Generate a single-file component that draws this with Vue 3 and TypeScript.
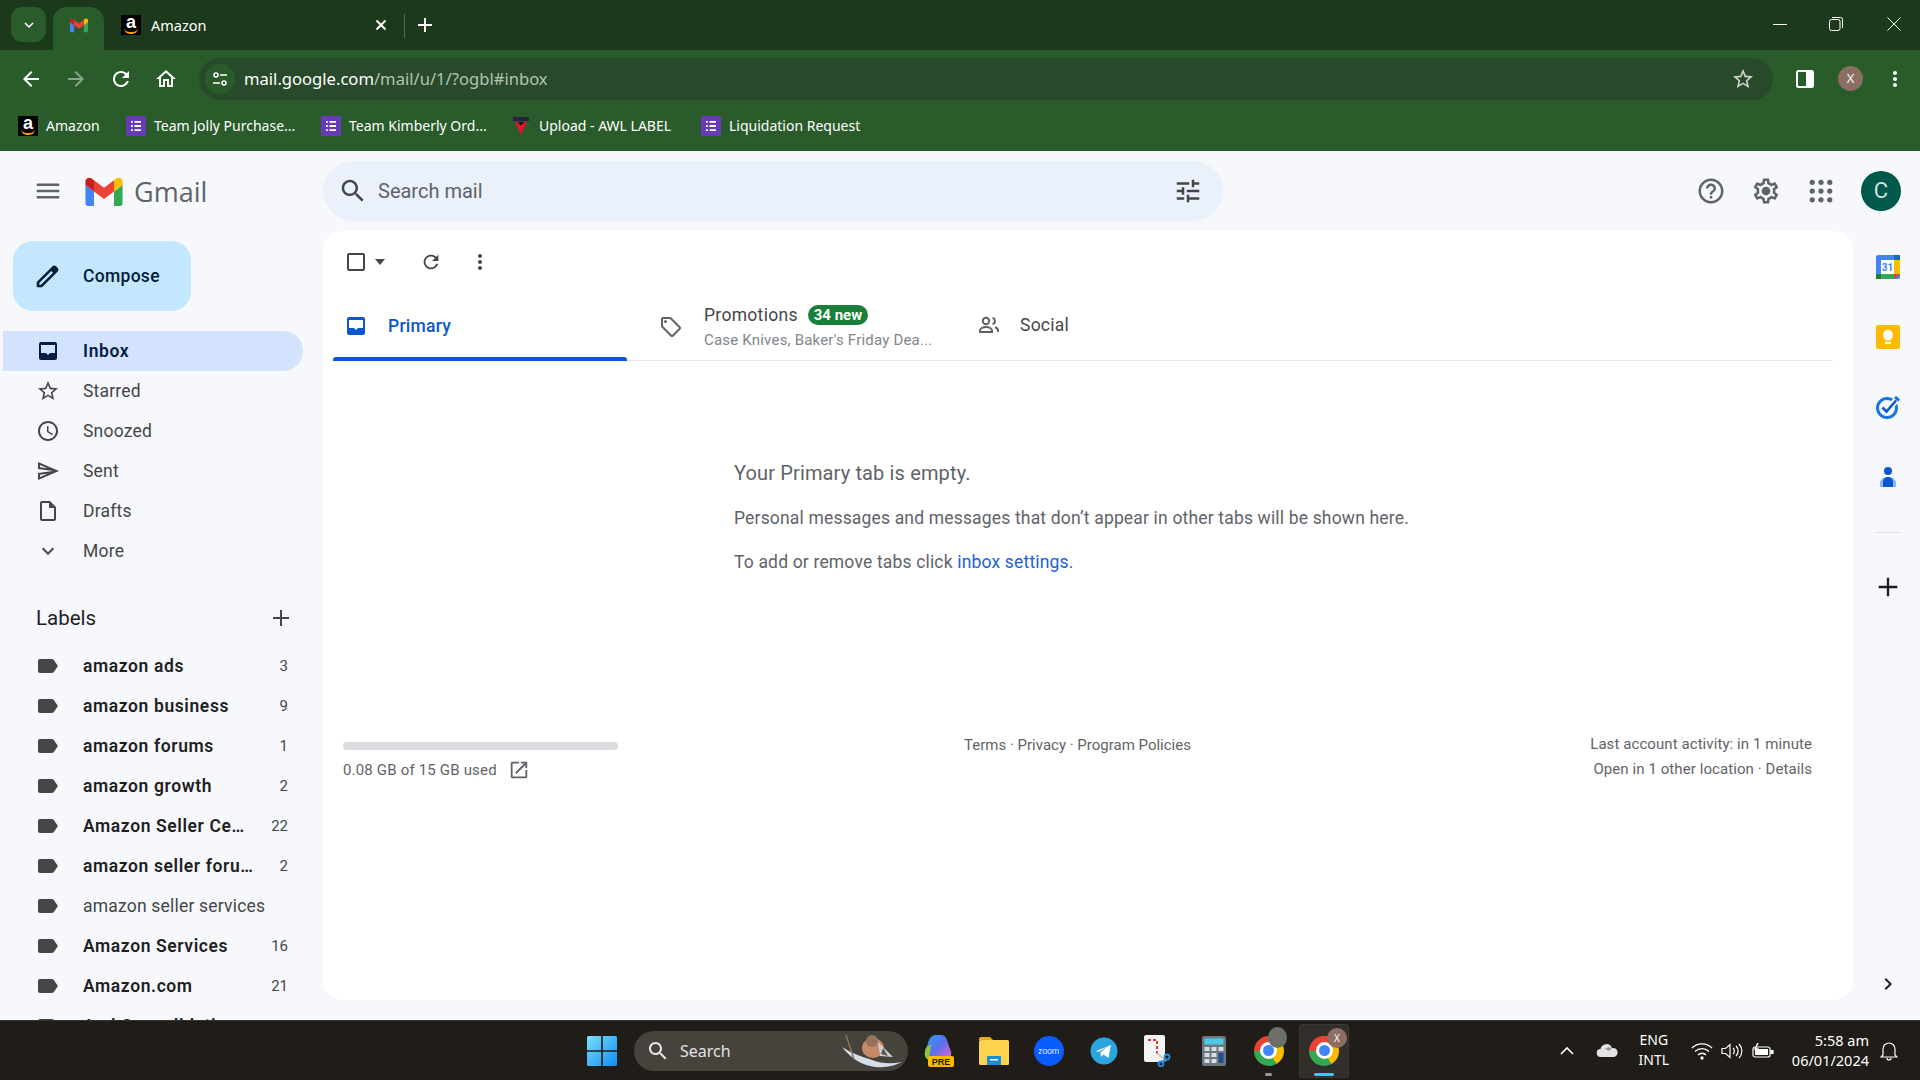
<script setup lang="ts">
const paths = {
  back: 'M20 11H7.83l5.59-5.59L12 4l-8 8 8 8 1.41-1.41L7.83 13H20v-2z',
  forward: 'M4 11h12.17l-5.59-5.59L12 4l8 8-8 8-1.41-1.41L16.17 13H4v-2z',
  reload: 'M17.65 6.35C16.2 4.9 14.21 4 12 4c-4.42 0-7.99 3.58-7.99 8s3.57 8 7.99 8c3.73 0 6.84-2.55 7.73-6h-2.08c-.82 2.33-3.04 4-5.65 4-3.31 0-6-2.69-6-6s2.69-6 6-6c1.66 0 3.14.69 4.22 1.78L13 11h7V4l-2.35 2.35z',
  home: 'M12 5.69l5 4.5V18h-2v-6H9v6H7v-7.81l5-4.5M12 3L2 12h3v8h6v-6h2v6h6v-8h3L12 3z',
  star: 'M22 9.24l-7.19-.62L12 2 9.19 8.63 2 9.24l5.46 4.73L5.82 21 12 17.27 18.18 21l-1.63-7.03L22 9.24zM12 15.4l-3.76 2.27 1-4.28-3.32-2.88 4.38-.38L12 6.1l1.71 4.04 4.38.38-3.32 2.88 1 4.28L12 15.4z',
  menu: 'M3 18h18v-2H3v2zm0-5h18v-2H3v2zm0-7v2h18V6H3z',
  search: 'M15.5 14h-.79l-.28-.27C15.41 12.59 16 11.11 16 9.5 16 5.91 13.09 3 9.5 3S3 5.91 3 9.5 5.91 16 9.5 16c1.61 0 3.09-.59 4.23-1.57l.27.28v.79l5 4.99L20.49 19l-4.99-5zm-6 0C7.01 14 5 11.99 5 9.5S7.01 5 9.5 5 14 7.01 14 9.5 11.99 14 9.5 14z',
  tune: 'M3 17v2h6v-2H3zM3 5v2h10V5H3zm10 16v-2h8v-2h-8v-2h-2v6h2zM7 9v2H3v2h4v2h2V9H7zm14 4v-2H11v2h10zm-6-4h2V7h4V5h-4V3h-2v6z',
  help: 'M11 18h2v-2h-2v2zm1-16C6.48 2 2 6.48 2 12s4.48 10 10 10 10-4.48 10-10S17.52 2 12 2zm0 18c-4.41 0-8-3.59-8-8s3.59-8 8-8 8 3.59 8 8-3.59 8-8 8zm0-14c-2.21 0-4 1.79-4 4h2c0-1.1.9-2 2-2s2 .9 2 2c0 2-3 1.75-3 5h2c0-2.25 3-2.5 3-5 0-2.21-1.79-4-4-4z',
  gear: 'M19.43 12.98c.04-.32.07-.64.07-.98 0-.34-.03-.66-.07-.98l2.11-1.65c.19-.15.24-.42.12-.64l-2-3.46c-.09-.16-.26-.25-.44-.25-.06 0-.12.01-.17.03l-2.49 1c-.52-.4-1.08-.73-1.69-.98l-.38-2.65C14.46 2.18 14.25 2 14 2h-4c-.25 0-.46.18-.49.42l-.38 2.65c-.61.25-1.17.59-1.69.98l-2.49-1c-.06-.02-.12-.03-.18-.03-.17 0-.34.09-.43.25l-2 3.46c-.13.22-.07.49.12.64l2.11 1.65c-.04.32-.07.65-.07.98 0 .33.03.66.07.98l-2.11 1.65c-.19.15-.24.42-.12.64l2 3.46c.09.16.26.25.44.25.06 0 .12-.01.17-.03l2.49-1c.52.4 1.08.73 1.69.98l.38 2.65c.03.24.24.42.49.42h4c.25 0 .46-.18.49-.42l.38-2.65c.61-.25 1.17-.59 1.69-.98l2.49 1c.06.02.12.03.18.03.17 0 .34-.09.43-.25l2-3.46c.12-.22.07-.49-.12-.64l-2.11-1.65zm-1.98-1.71c.04.31.05.52.05.73 0 .21-.02.43-.05.73l-.14 1.13.89.7 1.08.84-.7 1.21-1.27-.51-1.04-.42-.9.68c-.43.32-.84.56-1.25.73l-1.06.43-.16 1.13-.2 1.35h-1.4l-.19-1.35-.16-1.13-1.06-.43c-.43-.18-.83-.41-1.23-.71l-.91-.7-1.06.43-1.27.51-.7-1.21 1.08-.84.89-.7-.14-1.13c-.03-.31-.05-.54-.05-.74s.02-.43.05-.73l.14-1.13-.89-.7-1.08-.84.7-1.21 1.27.51 1.04.42.9-.68c.43-.32.84-.56 1.25-.73l1.06-.43.16-1.13.2-1.35h1.39l.19 1.35.16 1.13 1.06.43c.43.18.83.41 1.23.71l.91.7 1.06-.43 1.27-.51.7 1.21-1.07.85-.89.7.14 1.13zM12 8.5a3.5 3.5 0 1 0 0 7 3.5 3.5 0 0 0 0-7z',
  inbox: 'M19 3H5c-1.1 0-2 .9-2 2v14c0 1.1.9 2 2 2h14c1.1 0 2-.9 2-2V5c0-1.1-.9-2-2-2zM5 6h14v8h-5l-2 2-2-2H5V6z',
  clock: 'M11.99 2C6.47 2 2 6.48 2 12s4.47 10 9.99 10C17.52 22 22 17.52 22 12S17.52 2 11.99 2zM12 20c-4.42 0-8-3.58-8-8s3.58-8 8-8 8 3.58 8 8-3.58 8-8 8zm.5-13H11v6l5.25 3.15.75-1.23-4.5-2.67z',
  send: 'M4.01 6.03l7.51 3.22-7.52-1 .01-2.22m7.5 8.72L4 17.97v-2.22l7.51-1M2.01 3L2 10l15 2-15 2 .01 7L23 12 2.01 3z',
  draft: 'M14 2H6c-1.1 0-2 .9-2 2v16c0 1.1.9 2 2 2h12c1.1 0 2-.9 2-2V8l-6-6zm4 18H6V4h7v5h5v11z',
  more: 'M16.59 8.59L12 13.17 7.41 8.59 6 10l6 6 6-6z',
  plus: 'M20 13h-7v7h-2v-7H4v-2h7V4h2v7h7v2z',
  label: 'M17.63 5.84C17.27 5.33 16.67 5 16 5L4 5.01C2.9 5.01 2 5.9 2 7v10c0 1.1.9 1.99 2 1.99L16 19c.67 0 1.27-.33 1.63-.84L22 12l-4.37-6.16z',
  dots: 'M12 8c1.1 0 2-.9 2-2s-.9-2-2-2-2 .9-2 2 .9 2 2 2zm0 2c-1.1 0-2 .9-2 2s.9 2 2 2 2-.9 2-2-.9-2-2-2zm0 6c-1.1 0-2 .9-2 2s.9 2 2 2 2-.9 2-2-.9-2-2-2z',
  tag: 'M21.41 11.58l-9-9C12.05 2.22 11.55 2 11 2H4c-1.1 0-2 .9-2 2v7c0 .55.22 1.05.59 1.42l9 9c.36.36.86.58 1.41.58s1.05-.22 1.41-.59l7-7c.37-.36.59-.86.59-1.41s-.23-1.06-.59-1.42zM13 20.01L4 11V4h7v-.01l9 9-7 7.02zM6.5 5A1.5 1.5 0 1 0 6.5 8a1.5 1.5 0 0 0 0-3z',
  external: 'M19 19H5V5h7V3H5c-1.11 0-2 .9-2 2v14c0 1.1.89 2 2 2h14c1.1 0 2-.9 2-2v-7h-2v7zM14 3v2h3.59l-9.83 9.83 1.41 1.41L19 6.41V10h2V3h-7z',
  pencil: 'M3 21v-4.2L15.6 4.2a2 2 0 0 1 2.8 0l1.4 1.4a2 2 0 0 1 0 2.8L7.2 21H3zm2-2h1.4L16 9.4 14.6 8 5 17.6V19z',
  right: 'M8.59 16.59L13.17 12 8.59 7.41 10 6l6 6-6 6-1.41-1.41z',
  check: 'M19 5v14H5V5h14m0-2H5c-1.1 0-2 .9-2 2v14c0 1.1.9 2 2 2h14c1.1 0 2-.9 2-2V5c0-1.1-.9-2-2-2z',
}

const bookmarks = [
  { name: 'Amazon', kind: 'amazon', width: 108 },
  { name: 'Team Jolly Purchase...', kind: 'form', width: 195 },
  { name: 'Team Kimberly Ord...', kind: 'form', width: 190 },
  { name: 'Upload - AWL LABEL', kind: 'upload', width: 190 },
  { name: 'Liquidation Request', kind: 'form', width: 190 },
]

const navItems = [
  { name: 'Inbox', icon: paths.inbox, active: true },
  { name: 'Starred', icon: paths.star },
  { name: 'Snoozed', icon: paths.clock },
  { name: 'Sent', icon: paths.send },
  { name: 'Drafts', icon: paths.draft },
  { name: 'More', icon: paths.more },
]

const labels = [
  { name: 'amazon ads', count: '3', unread: true },
  { name: 'amazon business', count: '9', unread: true },
  { name: 'amazon forums', count: '1', unread: true },
  { name: 'amazon growth', count: '2', unread: true },
  { name: 'Amazon Seller Central', count: '22', unread: true },
  { name: 'amazon seller forums', count: '2', unread: true },
  { name: 'amazon seller services', count: '', unread: false },
  { name: 'Amazon Services', count: '16', unread: true },
  { name: 'Amazon.com', count: '21', unread: true },
  { name: 'And Consolidation', count: '', unread: true },
]
</script>

<template>
  <div class="screen">
    <!-- chrome tab strip -->
    <div class="tabstrip">
      <div class="tab-search">
        <svg width="18" height="18" viewBox="0 0 24 24" fill="#fff"><path :d="paths.more" /></svg>
      </div>
      <div class="tab-active">
        <svg class="m-logo-small" viewBox="0 0 52 42"><path fill="#4285f4" d="M3.6 42h8.4V21.6L0 12.6V38.4C0 40.4 1.6 42 3.6 42z" /><path fill="#34a853" d="M40 42h8.4c2 0 3.6-1.6 3.6-3.6V12.6L40 21.6z" /><path fill="#fbbc04" d="M40 6v15.6l12-9V7.8c0-4.45-5.08-6.99-8.64-4.32z" /><path fill="#ea4335" d="M12 21.6V6l14 10.5L40 6v15.6L26 32.1z" /><path fill="#c5221f" d="M0 7.8v4.8l12 9V6L8.64 3.48C5.08.81 0 3.35 0 7.8z" /></svg>
      </div>
      <div class="tab-other">
        <span class="fav-amazon">a<i></i></span>
        <span class="tab-title">Amazon</span>
        <svg class="tab-close" width="14" height="14" viewBox="0 0 14 14" stroke="#fff" stroke-width="2"><path d="M2.5 2.5l9 9M11.5 2.5l-9 9" /></svg>
      </div>
      <div class="tab-sep"></div>
      <svg class="tab-new" width="16" height="16" viewBox="0 0 16 16" stroke="#fff" stroke-width="2"><path d="M8 1v14M1 8h14" /></svg>
      <div class="win-controls">
        <svg width="14" height="14" viewBox="0 0 14 14" stroke="#fff"><path d="M0 7.5h14" /></svg>
        <svg class="win-restore" width="14" height="14" viewBox="0 0 14 14" fill="none" stroke="#fff"><rect x="0.5" y="2.5" width="10.5" height="11" rx="2" /><path d="M3 .5h8.5a2 2 0 0 1 2 2V11" /></svg>
        <svg class="win-close" width="14" height="14" viewBox="0 0 14 14" stroke="#fff"><path d="M.5.5l13 13M13.5.5l-13 13" /></svg>
      </div>
    </div>

    <!-- chrome toolbar -->
    <div class="toolbar">
      <svg class="nav-btn" viewBox="0 0 24 24" fill="#fff"><path :d="paths.back" /></svg>
      <svg class="nav-btn dim" viewBox="0 0 24 24" fill="#fff"><path :d="paths.forward" /></svg>
      <svg class="nav-btn" viewBox="0 0 24 24" fill="#fff"><path :d="paths.reload" /></svg>
      <svg class="nav-btn" viewBox="0 0 24 24" fill="#fff"><path :d="paths.home" /></svg>
      <div class="omnibox">
        <span class="chip">
          <svg width="16" height="16" viewBox="0 0 16 16" fill="none" stroke="#fff" stroke-width="1.5"><circle cx="4" cy="4" r="2" /><path d="M8 4h7M1 12h7" /><circle cx="12" cy="12" r="2" /></svg>
        </span>
        <span class="url"><b>mail.google.com</b>/mail/u/1/?ogbl#inbox</span>
        <svg class="omni-star" width="24" height="24" viewBox="0 0 24 24" fill="#d0d5d0"><path :d="paths.star" /></svg>
      </div>
      <svg class="side-panel" width="18" height="18" viewBox="0 0 18 18"><rect x="1" y="1" width="16" height="16" rx="1.5" fill="none" stroke="#fff" stroke-width="2" /><rect x="10" y="1" width="7" height="16" fill="#fff" /></svg>
      <span class="profile">X</span>
      <svg class="chrome-dots" width="24" height="24" viewBox="0 0 24 24" fill="#fff"><path :d="paths.dots" /></svg>
    </div>

    <!-- bookmarks -->
    <div class="bookmarks">
      <div v-for="b in bookmarks" :key="b.name" class="bookmark" :style="{ width: b.width + 'px' }">
        <span v-if="b.kind === 'amazon'" class="fav-amazon">a<i></i></span>
        <svg v-else-if="b.kind === 'form'" class="fav" viewBox="0 0 20 20"><rect width="20" height="20" rx="1" fill="#673ab7" /><path d="M5 5h1.8v1.8H5zM8.5 5H15v1.8H8.5zM5 9.1h1.8v1.8H5zM8.5 9.1H15v1.8H8.5zM5 13.2h1.8V15H5zM8.5 13.2H15V15H8.5z" fill="#fff" /></svg>
        <svg v-else class="fav" viewBox="0 0 20 20"><rect x="2" y="1" width="16" height="4" fill="#2b2140" /><path d="M4 6h12l-6 13z" fill="#e3122d" /><path d="M6.500 6h7L10 9.500z" fill="#1c1018" /></svg>
        <span class="bookmark-name">{{ b.name }}</span>
      </div>
    </div>

    <!-- gmail -->
    <div class="gmail">
      <header class="gm-header">
        <div class="gm-brand">
          <svg class="gm-menu" viewBox="0 0 24 24" fill="#5f6368"><path :d="paths.menu" /></svg>
          <svg class="gm-logo" viewBox="0 0 52 42"><path fill="#4285f4" d="M3.6 42h8.4V21.6L0 12.6V38.4C0 40.4 1.6 42 3.6 42z" /><path fill="#34a853" d="M40 42h8.4c2 0 3.6-1.6 3.6-3.6V12.6L40 21.6z" /><path fill="#fbbc04" d="M40 6v15.6l12-9V7.8c0-4.45-5.08-6.99-8.64-4.32z" /><path fill="#ea4335" d="M12 21.6V6l14 10.5L40 6v15.6L26 32.1z" /><path fill="#c5221f" d="M0 7.8v4.8l12 9V6L8.64 3.48C5.08.81 0 3.35 0 7.8z" /></svg>
          <span class="gm-word">Gmail</span>
        </div>
        <div class="gm-search">
          <svg width="30" height="30" viewBox="0 0 24 24" fill="#444746"><path :d="paths.search" /></svg>
          <span class="gm-search-text">Search mail</span>
          <svg class="gm-tune" width="30" height="30" viewBox="0 0 24 24" fill="#444746"><path :d="paths.tune" /></svg>
        </div>
        <div class="gm-actions">
          <svg width="30" height="30" viewBox="0 0 24 24" fill="#5f6368"><path :d="paths.help" /></svg>
          <svg width="30" height="30" viewBox="0 0 24 24" fill="#5f6368"><path :d="paths.gear" /></svg>
          <svg width="30" height="30" viewBox="0 0 24 24" fill="#5f6368"><g v-for="y in [5, 12, 19]" :key="y"><circle v-for="x in [5, 12, 19]" :key="x" :cx="x" :cy="y" r="2.1" /></g></svg>
          <span class="gm-avatar">C</span>
        </div>
      </header>

      <div class="gm-body">
        <aside class="gm-side">
          <button class="compose" type="button">
            <svg width="30" height="30" viewBox="0 0 24 24" fill="#001d35"><path :d="paths.pencil" /></svg>
            <span>Compose</span>
          </button>
          <div v-for="n in navItems" :key="n.name" class="row" :class="{ 'row--active': n.active }">
            <svg class="row-icon" viewBox="0 0 24 24"><path :d="n.icon" fill-rule="evenodd" /></svg>
            <span class="row-name">{{ n.name }}</span>
          </div>
          <div class="labels-head">
            <span>Labels</span>
            <svg width="24" height="24" viewBox="0 0 24 24" fill="#444746"><path :d="paths.plus" /></svg>
          </div>
          <div v-for="l in labels" :key="l.name" class="row" :class="{ 'row--unread': l.unread }">
            <svg class="row-icon" viewBox="0 0 24 24"><path :d="paths.label" /></svg>
            <span class="row-name">{{ l.name }}</span>
            <span v-if="l.count" class="row-count">{{ l.count }}</span>
          </div>
        </aside>

        <main class="gm-card">
          <div class="mail-tools">
            <svg class="tool-check" width="24" height="24" viewBox="0 0 24 24" fill="#444746"><path :d="paths.check" /></svg>
            <svg class="tool-caret" width="10" height="6" viewBox="0 0 10 6" fill="#444746"><path d="M0 0h10L5 6z" /></svg>
            <svg class="tool-refresh" width="22" height="22" viewBox="0 0 24 24" fill="#444746"><path :d="paths.reload" /></svg>
            <svg class="tool-dots" width="24" height="24" viewBox="0 0 24 24" fill="#444746"><path :d="paths.dots" /></svg>
          </div>

          <div class="mail-tabs">
            <div class="mail-tab mail-tab--primary">
              <svg width="24" height="24" viewBox="0 0 24 24" fill="#0b57d0"><path :d="paths.inbox" fill-rule="evenodd" /></svg>
              <span>Primary</span>
            </div>
            <div class="mail-tab mail-tab--promo">
              <svg width="24" height="24" viewBox="0 0 24 24" fill="#5f6368"><path :d="paths.tag" fill-rule="evenodd" /></svg>
              <div class="promo-text">
                <div class="promo-top"><span>Promotions</span><em>34 new</em></div>
                <div class="promo-sub">Case Knives, Baker's Friday Dea...</div>
              </div>
            </div>
            <div class="mail-tab mail-tab--social">
              <svg width="24" height="24" viewBox="0 0 24 24" fill="none" stroke="#5f6368" stroke-width="2"><circle cx="9" cy="8" r="3.2" /><path d="M3 19v-1.5c0-2 3-3.5 6-3.5s6 1.5 6 3.5V19z" /><path d="M15.5 4.9a3.2 3.2 0 0 1 0 6.2M18 14.3c1.7.5 3 1.7 3 3.2V19" /></svg>
              <span>Social</span>
            </div>
          </div>

          <div class="empty">
            <h3>Your Primary tab is empty.</h3>
            <p>Personal messages and messages that don’t appear in other tabs will be shown here.</p>
            <p class="empty-last">To add or remove tabs click <a>inbox settings</a>.</p>
          </div>

          <footer class="gm-foot">
            <div>
              <div class="storage"></div>
              <div class="storage-text">
                <span>0.08 GB of 15 GB used</span>
                <svg width="22" height="22" viewBox="0 0 24 24" fill="#5f6368"><path :d="paths.external" /></svg>
              </div>
            </div>
            <div class="foot-links">Terms · Privacy · Program Policies</div>
            <div class="foot-right">
              <div>Last account activity: in 1 minute</div>
              <div>Open in 1 other location · Details</div>
            </div>
          </footer>
        </main>

        <aside class="gm-rail">
          <div class="rail-item">
            <svg width="26" height="26" viewBox="0 0 26 26">
              <rect x="1" y="1" width="24" height="24" rx="2" fill="#4285f4" />
              <rect x="19" y="1" width="6" height="5" fill="#1967d2" />
              <rect x="19" y="6" width="6" height="14" fill="#fbbc04" />
              <rect x="1" y="20" width="18" height="5" fill="#34a853" />
              <path d="M19 20h6l-6 5z" fill="#ea4335" />
              <rect x="1" y="20" width="5" height="5" fill="#188038" />
              <rect x="6" y="6" width="13" height="14" fill="#fff" />
              <text x="12.5" y="17" class="cal-num">31</text>
            </svg>
          </div>
          <div class="rail-item">
            <svg width="26" height="26" viewBox="0 0 26 26">
              <rect x="1" y="1" width="24" height="24" rx="2" fill="#ffba00" />
              <circle cx="13" cy="11" r="5" fill="#fff" />
              <rect x="10.5" y="13" width="5" height="3.5" fill="#fff" />
              <rect x="10" y="18" width="6" height="1.8" fill="#fff" />
            </svg>
          </div>
          <div class="rail-item">
            <svg width="26" height="26" viewBox="0 0 26 26" fill="none">
              <circle cx="12" cy="14" r="9.5" stroke="#1a73e8" stroke-width="3" />
              <path d="M7.5 13.5l4 4L22 5" stroke="#fff" stroke-width="6" />
              <path d="M7.5 13.5l4 4L21 6.5" stroke="#0b57d0" stroke-width="2.6" />
              <path d="M20 3l4 3.5" stroke="#1a73e8" stroke-width="3" />
            </svg>
          </div>
          <div class="rail-item">
            <svg width="26" height="26" viewBox="0 0 26 26">
              <circle cx="13" cy="7" r="4" fill="#0b57d0" />
              <path d="M5 23v-4c0-3 3-6 8-6s8 3 8 6v4z" fill="#8ab4f8" />
              <path d="M8 23v-5c0-3 2-5 5-5s5 2 5 5v5z" fill="#0b57d0" />
            </svg>
          </div>
          <div class="rail-line"></div>
          <div class="rail-item rail-item--plus">
            <svg width="28" height="28" viewBox="0 0 24 24" fill="#1f1f1f"><path :d="paths.plus" /></svg>
          </div>
          <svg class="rail-chevron" width="24" height="24" viewBox="0 0 24 24" fill="#1f1f1f"><path :d="paths.right" /></svg>
        </aside>
      </div>
    </div>

    <!-- windows taskbar -->
    <div class="taskbar">
      <svg class="tb-win" width="30" height="30" viewBox="0 0 30 30">
        <defs><linearGradient id="winBlue" x1="0" y1="0" x2="1" y2="1"><stop offset="0" stop-color="#7adfff" /><stop offset="1" stop-color="#0f8df0" /></linearGradient></defs>
        <path fill="url(#winBlue)" d="M0 1.5A1.5 1.5 0 0 1 1.5 0H14.2v14.2H0zM15.8 0h12.7A1.5 1.5 0 0 1 30 1.5V14.2H15.8zM0 15.8h14.2V30H1.5A1.5 1.5 0 0 1 0 28.5zM15.8 15.8H30V28.5a1.5 1.5 0 0 1-1.5 1.5H15.8z" />
      </svg>
      <div class="tb-search">
        <svg width="24" height="24" viewBox="0 0 24 24" fill="#e8e8e8"><path :d="paths.search" /></svg>
        <span>Search</span>
        <svg class="tb-bird" width="72" height="40" viewBox="0 0 72 40">
          <path d="M6 16c8 10 16 16 28 19 13 3 24 0 32-4-10 2-20 2-30-2C24 25 15 22 6 16z" fill="#d7dee8" />
          <path d="M10 4l8 24" stroke="#8a7a5a" stroke-width="1.5" />
          <ellipse cx="37" cy="17" rx="11" ry="10" fill="#c58a66" />
          <circle cx="36" cy="10" r="6" fill="#94725c" />
          <path d="M42 11l15 15-13-1z" fill="#cfcfcf" />
          <path d="M47 17l5 8-7-2z" fill="#555" />
        </svg>
      </div>
      <div class="tb-apps">
        <div class="tb-app">
          <svg width="32" height="34" viewBox="0 0 32 34">
            <defs><linearGradient id="copilot" x1="0" y1="0" x2="1" y2="1"><stop offset="0" stop-color="#2aa3e8" /><stop offset=".5" stop-color="#5b6ef0" /><stop offset="1" stop-color="#e66ac8" /></linearGradient></defs>
            <path d="M6 6c1-3 4-5 7-5h5c3 0 5 2 6 5l4 12c1 5-2 8-6 8H9C4 26 1 22 2 18z" fill="url(#copilot)" />
            <path d="M2 18c0-4 3-7 6-7L6 26c-3-1-5-4-4-8z" fill="#8fc53f" />
            <rect x="5" y="22" width="26" height="11" rx="2" fill="#ffb900" />
            <text x="18" y="31" class="pre">PRE</text>
          </svg>
        </div>
        <div class="tb-app">
          <svg width="32" height="30" viewBox="0 0 32 30">
            <path d="M1 3a2 2 0 0 1 2-2h9l3 3h-14z" fill="#e8a913" />
            <rect x="1" y="4" width="30" height="25" rx="1.5" fill="#ffd24d" />
            <rect x="9" y="20" width="14" height="9" fill="#1a8fd6" />
            <rect x="12" y="23" width="8" height="1.5" fill="#fff" />
          </svg>
        </div>
        <div class="tb-app">
          <span class="zoom">zoom</span>
        </div>
        <div class="tb-app">
          <svg width="28" height="28" viewBox="0 0 28 28">
            <circle cx="14" cy="14" r="13.5" fill="#2aa5e0" />
            <path d="M6 14l15-6-2.5 13-5-3.5-2.5 2.5-.5-4.5 7-6-9 5.5z" fill="#fff" />
          </svg>
        </div>
        <div class="tb-app">
          <svg width="32" height="32" viewBox="0 0 32 32" fill="none">
            <rect x="1" y="0" width="21" height="27" rx="2" fill="#f4f4f4" />
            <path d="M5 5h9v14" stroke="#d83b2e" stroke-width="2" stroke-dasharray="3 2" />
            <path d="M14 18l9 8" stroke="#ccc" stroke-width="2" />
            <circle cx="24" cy="22" r="2.5" stroke="#1f8fe0" stroke-width="1.8" />
            <circle cx="18" cy="29" r="2.5" stroke="#1f8fe0" stroke-width="1.8" />
            <path d="M19 27l4-3" stroke="#1f8fe0" stroke-width="1.8" />
          </svg>
        </div>
        <div class="tb-app">
          <svg width="24" height="30" viewBox="0 0 24 30">
            <rect width="24" height="30" rx="2" fill="#6c7780" />
            <rect x="2.5" y="2.5" width="19" height="6" fill="#4ccbe8" />
            <g fill="#d8dde1">
              <rect x="2.5" y="11" width="5" height="4" /><rect x="9.5" y="11" width="5" height="4" />
              <rect x="2.5" y="17" width="5" height="4" /><rect x="9.5" y="17" width="5" height="4" />
              <rect x="2.5" y="23" width="5" height="4" /><rect x="9.5" y="23" width="5" height="4" />
              <rect x="16.5" y="11" width="5" height="4" />
            </g>
            <rect x="16.5" y="17" width="5" height="10" fill="#1b4f8f" />
          </svg>
        </div>
        <div class="tb-app tb-app--chrome">
          <span class="chrome-logo"></span>
          <span class="tb-photo"></span>
          <span class="tb-mark"></span>
        </div>
        <div class="tb-app tb-app--chrome tb-app--open">
          <span class="chrome-logo"></span>
          <span class="tb-badge">X</span>
          <span class="tb-mark tb-mark--on"></span>
        </div>
      </div>

      <div class="tray">
        <svg class="tray-chev" width="16" height="16" viewBox="0 0 16 16" fill="none" stroke="#fff" stroke-width="1.6"><path d="M2 11l6-6 6 6" /></svg>
        <svg class="tray-cloud" width="22" height="14" viewBox="0 0 22 14"><path d="M5 13a4 4 0 0 1-.5-8A6 6 0 0 1 16 4a4.5 4.5 0 0 1 2 9z" fill="#e4e4e4" /><path d="M9 5a6 6 0 0 1 7-1l-3 3z" fill="#9a9a9a" /></svg>
        <div class="tray-lang">ENG<br />INTL</div>
        <svg class="tray-wifi" width="22" height="18" viewBox="0 0 22 18" fill="none" stroke="#fff" stroke-width="1.3"><path d="M1 6a14 14 0 0 1 20 0M4 9.5a10 10 0 0 1 14 0M7 13a5.5 5.5 0 0 1 8 0" /><circle cx="11" cy="16" r="1" fill="#fff" /></svg>
        <svg class="tray-vol" width="22" height="18" viewBox="0 0 22 18" fill="none" stroke="#fff" stroke-width="1.2"><path d="M1 6.5h3.5L9 2.5v13l-4.5-4H1z" /><path d="M12 6a4 4 0 0 1 0 6M15 4a7 7 0 0 1 0 10M18 2a10 10 0 0 1 0 14" /></svg>
        <svg class="tray-bat" width="22" height="16" viewBox="0 0 22 16" fill="none" stroke="#fff" stroke-width="1.2"><rect x="1" y="4" width="17" height="10" rx="2" /><path d="M19 7.5h2v3h-2z" fill="#fff" /><path d="M6 0L3 6h3l-1 4" stroke-width="1.5" /><rect x="3" y="6" width="13" height="6" fill="#fff" stroke="none" /></svg>
        <div class="tray-clock"><div>5:58 am</div><div>06/01/2024</div></div>
        <svg class="tray-bell" width="18" height="20" viewBox="0 0 18 20" fill="none" stroke="#fff" stroke-width="1.2"><path d="M3 14V8a6 6 0 0 1 12 0v6l2 2H1zM7 17a2 2 0 0 0 4 0" /></svg>
      </div>
    </div>
  </div>
</template>

<style scoped>
.screen {
  width: 1920px;
  height: 1080px;
  display: flex;
  flex-direction: column;
  overflow: hidden;
  font-family: "Noto Sans", "Open Sans", sans-serif;
  background: #f6f8fc;
}

/* chrome */
.tabstrip {
  height: 50px;
  flex: none;
  display: flex;
  align-items: flex-start;
  background: #1c3a1b;
  color: #fff;
  padding-left: 11px;
}
.tab-search {
  width: 35px;
  height: 35px;
  margin-top: 7px;
  border-radius: 11px;
  background: #2a5c2b;
  display: flex;
  align-items: center;
  justify-content: center;
}
.tab-active {
  width: 51px;
  height: 43px;
  margin: 7px 0 0 7px;
  border-radius: 14px 14px 0 0;
  background: #2a5c2b;
  display: flex;
  align-items: center;
  justify-content: center;
}
.m-logo-small { width: 18px; height: 16px; margin-bottom: 8px; }
.tab-other {
  width: 270px;
  height: 36px;
  margin: 7px 0 0 17px;
  display: flex;
  align-items: center;
  gap: 10px;
  font-size: 14.5px;
}
.tab-title { flex: 1; }
.tab-close { margin-right: 3px; }
.fav-amazon {
  position: relative;
  width: 20px;
  height: 20px;
  flex: none;
  background: #000;
  color: #fff;
  font: 700 18px/15px "Liberation Sans", sans-serif;
  text-align: center;
}
.fav-amazon i {
  position: absolute;
  left: 3px;
  right: 3px;
  bottom: 1px;
  height: 4px;
  border-bottom: 2px solid #f90;
  border-radius: 0 0 10px 10px;
}
.tab-sep {
  width: 1px;
  height: 24px;
  margin: 14px 0 0 13px;
  background: #3f7a3f;
}
.tab-new { margin: 17px 0 0 12px; }
.win-controls {
  margin-left: auto;
  height: 48px;
  padding-right: 19px;
  display: flex;
  align-items: center;
}
.win-restore { margin-left: 42px; }
.win-close { margin-left: 44px; }

.toolbar {
  height: 58px;
  flex: none;
  display: flex;
  align-items: center;
  padding: 0 13px 0 19px;
  background: #2a5c2b;
  border-bottom: 1px solid #2d602e;
  box-sizing: border-box;
}
.nav-btn { width: 24px; height: 24px; margin-right: 21px; flex: none; }
.dim { opacity: 0.45; }
.omnibox {
  width: 1574px;
  height: 42px;
  flex: none;
  display: flex;
  align-items: center;
  border-radius: 21px;
  background: #284a2b;
  padding: 0 18px 0 6px;
  box-sizing: border-box;
}
.chip {
  width: 30px;
  height: 30px;
  border-radius: 50%;
  background: #2a5c2b;
  display: flex;
  align-items: center;
  justify-content: center;
}
.url {
  margin-left: 9px;
  font-size: 16.6px;
  color: #b3c4b2;
}
.url b { font-weight: 400; color: #fff; }
.omni-star { margin-left: auto; }
.side-panel { margin-left: 23px; }
.profile {
  width: 25px;
  height: 25px;
  margin-left: 24px;
  border-radius: 50%;
  background: #8d6e63;
  color: #fff;
  font-size: 13px;
  line-height: 25px;
  text-align: center;
}
.chrome-dots { margin-left: 20px; }

.bookmarks {
  height: 43px;
  flex: none;
  display: flex;
  align-items: center;
  box-sizing: border-box;
  padding: 0 0 8px 18px;
  background: #2a5c2b;
  color: #fff;
  font-size: 14px;
}
.bookmark { display: flex; align-items: center; gap: 8px; white-space: nowrap; }
.fav { width: 20px; height: 20px; flex: none; }

/* gmail */
.gmail {
  flex: 1;
  min-height: 0;
  display: flex;
  flex-direction: column;
  font-family: Roboto, "Liberation Sans", sans-serif;
  color: #444746;
}
.gm-header {
  height: 80px;
  flex: none;
  display: flex;
  align-items: flex-start;
}
.gm-brand {
  width: 323px;
  height: 80px;
  flex: none;
  display: flex;
  align-items: center;
}
.gm-menu { width: 30px; height: 30px; margin-left: 33px; }
.gm-logo { width: 38px; height: 30px; margin-left: 22px; }
.gm-word {
  margin-left: 11px;
  font-size: 27px;
  color: #5f6368;
  font-family: "Open Sans", sans-serif;
}
.gm-search {
  width: 900px;
  height: 60px;
  margin-top: 10px;
  flex: none;
  display: flex;
  align-items: center;
  box-sizing: border-box;
  padding: 0 20px 0 15px;
  border-radius: 30px;
  background: #eaf1fb;
}
.gm-search-text { margin-left: 10px; font-size: 20px; color: #5f6368; }
.gm-tune { margin-left: auto; }
.gm-actions {
  flex: 1;
  height: 80px;
  display: flex;
  align-items: center;
  justify-content: flex-end;
  padding-right: 19px;
  gap: 25px;
}
.gm-avatar {
  width: 40px;
  height: 40px;
  border-radius: 50%;
  background: #00594a;
  color: #cfe3dd;
  font-size: 22px;
  line-height: 40px;
  text-align: center;
}

.gm-body { flex: 1; min-height: 0; display: flex; }
.gm-side {
  width: 323px;
  flex: none;
  overflow: hidden;
  padding-top: 10px;
  box-sizing: border-box;
}
.compose {
  width: 178px;
  height: 70px;
  margin: 0 0 20px 13px;
  display: flex;
  align-items: center;
  border: none;
  border-radius: 20px;
  background: #c2e7ff;
  color: #001d35;
  padding: 0 0 0 20px;
  font: 500 17.5px Roboto, sans-serif;
  letter-spacing: 0.3px;
}
.compose span { margin-left: 20px; }
.row {
  width: 300px;
  height: 40px;
  margin-left: 3px;
  display: flex;
  align-items: center;
  box-sizing: border-box;
  padding: 0 15px 0 33px;
  border-radius: 0 20px 20px 0;
  font-size: 17.5px;
  letter-spacing: 0.2px;
  color: #444746;
  fill: #444746;
}
.row-icon { width: 24px; height: 24px; flex: none; }
.row-name {
  margin-left: 23px;
  flex: 1;
  min-width: 0;
  overflow: hidden;
  white-space: nowrap;
  text-overflow: ellipsis;
}
.row-count {
  width: 35px;
  flex: none;
  text-align: right;
  font-size: 15px;
  color: #444746;
  font-weight: 400;
  letter-spacing: 0;
}
.row--active {
  background: #d3e3fd;
  color: #041e49;
  fill: #041e49;
  font-weight: 600;
  letter-spacing: 0.6px;
}
.row--unread { color: #1f1f1f; font-weight: 600; letter-spacing: 0.6px; }
.labels-head {
  height: 54px;
  margin-top: 20px;
  margin-bottom: 1px;
  display: flex;
  align-items: center;
  justify-content: space-between;
  padding: 0 30px 0 36px;
  font-size: 20.5px;
  color: #1f1f1f;
}

.gm-card {
  flex: 1;
  min-width: 0;
  margin-bottom: 20px;
  border-radius: 20px;
  background: #fff;
  display: flex;
  flex-direction: column;
  padding: 0 20px 0 10px;
}
.mail-tools {
  height: 61px;
  flex: none;
  display: flex;
  align-items: center;
  padding-left: 11px;
}
.tool-caret { margin-left: 7px; }
.tool-refresh { margin-left: 35px; }
.tool-dots { margin-left: 26px; }
.mail-tabs {
  height: 69px;
  flex: none;
  display: flex;
  border-bottom: 1px solid #e6e8eb;
  box-sizing: border-box;
  font-size: 17.5px;
  letter-spacing: 0.25px;
  color: #444746;
}
.mail-tab { display: flex; align-items: center; height: 68px; box-sizing: border-box; }
.mail-tab--primary {
  position: relative;
  width: 294px;
  padding: 0 0 1px 11px;
  gap: 20px;
  color: #0b57d0;
  font-weight: 500;
}
.mail-tab--primary::after {
  content: "";
  position: absolute;
  left: 0;
  right: 0;
  bottom: -1px;
  height: 4px;
  border-radius: 3px 3px 0 0;
  background: #0b57d0;
}
.mail-tab--promo { width: 333px; padding: 2px 0 0 32px; gap: 21px; }
.promo-top { display: flex; align-items: center; gap: 10px; color: #444746; letter-spacing: 0.3px; }
.promo-top span { line-height: 24px; }
.promo-top em {
  font-style: normal;
  font-size: 15px;
  font-weight: 700;
  letter-spacing: 0;
  line-height: 20px;
  padding: 0 6px;
  border-radius: 10px;
  background: #188038;
  color: #fff;
}
.promo-sub { font-size: 15px; line-height: 22px; letter-spacing: 0.2px; color: #80868b; margin-top: 2px; }
.mail-tab--social { padding: 0 0 2px 17px; gap: 19px; }

.empty { padding: 101px 0 0 401px; color: #5f6368; font-size: 17.5px; letter-spacing: 0.17px; }
.empty h3 { margin: 0; font-size: 20px; line-height: 22px; font-weight: 400; letter-spacing: 0.14px; }
.empty p { margin: 23px 0 0; line-height: 22px; }
.empty .empty-last { margin-top: 22px; }
.empty a { color: #1a62d6; }

.gm-foot {
  margin-top: 159px;
  display: grid;
  grid-template-columns: 1fr auto 1fr;
  padding: 0 21px 0 10px;
  font-size: 15px;
  line-height: 25px;
  color: #5f6368;
}
.storage { width: 275px; height: 8px; border-radius: 4px; background: #dadce0; margin: 10px 0 9px; }
.storage-text { display: flex; align-items: center; gap: 11px; line-height: 22px; letter-spacing: 0.18px; }
.foot-links { line-height: 26px; }
.foot-right { text-align: right; line-height: 25px; letter-spacing: 0.08px; }

.gm-rail {
  width: 67px;
  flex: none;
  display: flex;
  flex-direction: column;
  align-items: center;
  padding: 1px 0 24px 3px;
  box-sizing: border-box;
}
.rail-item { height: 70px; flex: none; display: flex; align-items: center; justify-content: center; }
.rail-line { width: 26px; height: 1px; margin-top: 20px; background: #dfe3e8; }
.rail-item--plus { margin-top: 19px; }
.rail-chevron { margin-top: auto; }
.cal-num { font: 700 10px Roboto, sans-serif; fill: #4285f4; text-anchor: middle; }

/* windows taskbar */
.taskbar {
  height: 60px;
  flex: none;
  display: flex;
  align-items: center;
  box-sizing: border-box;
  padding-left: 587px;
  background: #201c17;
  border-top: 1px solid #37332e;
  color: #fff;
  font-family: "Noto Sans", sans-serif;
}
.tb-search {
  width: 274px;
  height: 40px;
  margin-left: 17px;
  flex: none;
  display: flex;
  align-items: center;
  box-sizing: border-box;
  padding-left: 12px;
  border-radius: 20px;
  background: #46423c;
  font-size: 16px;
  color: #e2e2e2;
  overflow: hidden;
}
.tb-search span { margin-left: 10px; }
.tb-bird { margin-left: auto; }
.tb-apps { display: flex; margin-left: 3px; }
.tb-app {
  position: relative;
  width: 55px;
  height: 54px;
  flex: none;
  display: flex;
  align-items: center;
  justify-content: center;
}
.tb-app--open { background: #322e29; border-radius: 4px; box-shadow: inset 0 0 0 1px #3b3732; width: 50px; margin-left: 3px; }
.pre { font: 700 9px "Liberation Sans", sans-serif; fill: #1a1a1a; text-anchor: middle; }
.zoom {
  width: 30px;
  height: 30px;
  border-radius: 50%;
  background: #0b5cff;
  color: #dfe9ff;
  font: 9px/30px "Liberation Sans", sans-serif;
  text-align: center;
  letter-spacing: -0.3px;
}
.chrome-logo {
  position: relative;
  width: 30px;
  height: 30px;
  border-radius: 50%;
  background: conic-gradient(#ea4335 0 30deg, #fbbc04 30deg 150deg, #34a853 150deg 270deg, #ea4335 270deg);
  display: flex;
  align-items: center;
  justify-content: center;
}
.chrome-logo::after {
  content: "";
  width: 11px;
  height: 11px;
  border-radius: 50%;
  background: #4285f4;
  border: 3px solid #fff;
}
.tb-photo {
  position: absolute;
  top: 3px;
  right: 9px;
  width: 19px;
  height: 21px;
  border-radius: 50%;
  background: #6d6f6a;
}
.tb-badge {
  position: absolute;
  top: 4px;
  right: 2px;
  width: 20px;
  height: 20px;
  border-radius: 50%;
  background: #8d6e63;
  font-size: 10px;
  line-height: 20px;
  text-align: center;
}
.tb-mark {
  position: absolute;
  bottom: 2px;
  left: 50%;
  width: 7px;
  height: 3px;
  margin-left: -4px;
  border-radius: 2px;
  background: #9a9a9a;
}
.tb-mark--on { width: 20px; margin-left: -10px; background: #4cc2ff; }
.tray {
  margin-left: auto;
  display: flex;
  align-items: center;
  padding-right: 22px;
  font-size: 14px;
  line-height: 20px;
}
.tray-cloud { margin-left: 21px; }
.tray-lang { width: 44px; margin-left: 14px; text-align: center; margin-bottom: 2px; }
.tray-wifi { margin-left: 15px; }
.tray-vol { margin-left: 8px; }
.tray-bat { margin-left: 9px; }
.tray-clock { margin-left: 18px; text-align: right; font-size: 14.5px; margin-bottom: 2px; }
.tray-bell { margin-left: 11px; }
</style>

<style>
html, body { margin: 0; padding: 0; }
</style>
